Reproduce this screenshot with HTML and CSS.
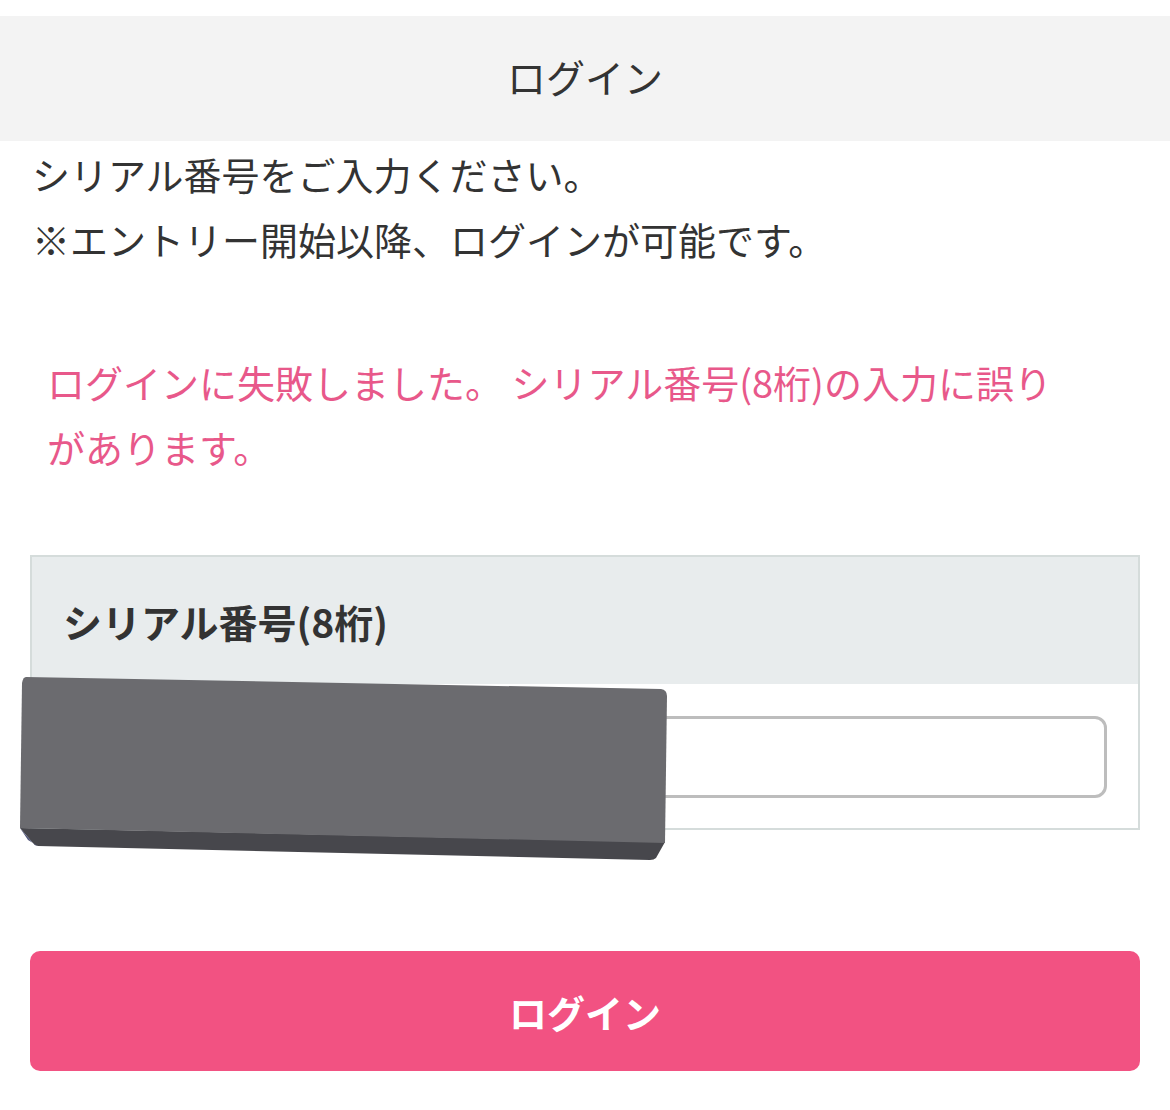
FILE: index.html
```html
<!DOCTYPE html>
<html lang="ja">
<head>
    <meta charset="UTF-8">
    <meta name="viewport" content="width=device-width, initial-scale=1.0">
    <title>ログイン</title>
    <link rel="stylesheet" href="styles.css">
</head>
<body>
    <header class="page-header">
        <h1 class="page-title">ログイン</h1>
    </header>

    <main class="content">
        <p class="intro">シリアル番号をご入力ください。<br>※エントリー開始以降、ログインが可能です。</p>

        <p class="error">ログインに失敗しました。 シリアル番号(8桁)の入力に誤りがあります。</p>

        <form class="login-form" onsubmit="return false;">
            <div class="field-table">
                <div class="field-head">シリアル番号(8桁)</div>
                <div class="field-body">
                    <input type="text" class="field-input" name="serial">
                </div>
            </div>
            <button type="submit" class="login-btn">ログイン</button>
        </form>
    </main>

    <!-- masking block laid over the input -->
    <svg class="mask" width="660" height="192" viewBox="0 0 660 192">
        <path d="M2 154 L647 168 L638 184 Q636 186 632 186 L20 172 Q16 171 14 168 Z" fill="#47474c"/>
        <path d="M2 154 L14 168 Q16 171 20 172 L10 166 Z" fill="#50567a"/>
        <path d="M8 3 L643 15 Q649 16 649 22 L647 169 L2 154 L4 9 Q5 3 8 3 Z" fill="#6b6b6f"/>
    </svg>
</body>
</html>
```

FILE: styles.css
```css
* {
    margin: 0;
    padding: 0;
    box-sizing: border-box;
}
body {
    font-family: "Noto Sans CJK JP", "Noto Sans", sans-serif;
    background: #fff;
    color: #333;
    position: relative;
    min-height: 1110px;
}
.page-header {
    margin-top: 16px;
    height: 125px;
    background-color: #f3f3f3;
    display: flex;
    justify-content: center;
    align-items: center;
}
.page-title {
    font-size: 39px;
    font-weight: 400;
    color: #333;
    line-height: 1;
    margin-top: -4px;
}
.content {
    padding: 2px 30px 0;
}
.intro {
    font-size: 38px;
    line-height: 65px;
    color: #333;
    padding-left: 2px;
    margin-top: -2px;
}
.error {
    margin: 78px 70px 0 17px;
    font-size: 38px;
    line-height: 65px;
    color: #e8588a;
}
.login-form {
    margin-top: 76px;
}
.field-table {
    border: 2px solid #d5dcdb;
}
.field-head {
    height: 127px;
    background-color: #e8eced;
    display: flex;
    align-items: center;
    padding-left: 31px;
    font-size: 39px;
    font-weight: 700;
    color: #333;
}
.field-body {
    padding: 32px 31px 30px;
    background: #fff;
}
.field-input {
    display: block;
    width: 100%;
    height: 82px;
    border: 3px solid #bdbdbd;
    border-radius: 12px;
    font-size: 36px;
    padding: 0 20px;
    outline: none;
}
.login-btn {
    display: block;
    width: 100%;
    height: 120px;
    margin-top: 121px;
    border: none;
    border-radius: 10px;
    background-color: #f25282;
    color: #fff;
    font-family: inherit;
    font-size: 38px;
    font-weight: 700;
    cursor: pointer;
}
.mask {
    position: absolute;
    left: 18px;
    top: 674px;
}
```
